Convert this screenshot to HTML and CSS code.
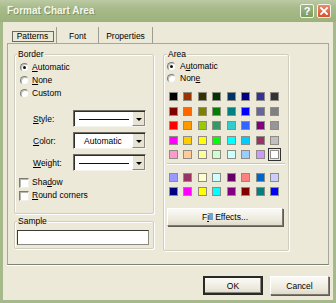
FILE: index.html
```html
<!DOCTYPE html>
<html>
<head>
<meta charset="utf-8">
<title>Format Chart Area</title>
<link rel="stylesheet" href="styles.css">
</head>
<body>
<div class="window">
  <div class="titlebar">
    <span class="title">Format Chart Area</span>
    <div class="tb-btns">
      <span class="tb-btn help">?</span>
      <span class="tb-btn close"><svg width="8" height="8" viewBox="0 0 8 8"><path d="M1 1L7 7M7 1L1 7" stroke="#fff" stroke-width="1.8" stroke-linecap="square"/></svg></span>
    </div>
  </div>
  <div class="frame">
    <div class="client">
      <div class="tabs">
        <div class="tab tab-patterns"><span class="focus">Patterns</span></div>
        <div class="tab tab-font">Font</div>
        <div class="tab tab-props">Properties</div>
      </div>
      <div class="panel">
        <div class="col-left">
          <div class="group group-border">
            <span class="group-title">Border</span>
            <div class="radio-list">
              <div class="row radio-row"><span class="radio checked"></span><span><u>A</u>utomatic</span></div>
              <div class="row radio-row"><span class="radio"></span><span><u>N</u>one</span></div>
              <div class="row radio-row"><span class="radio"></span><span>Custom</span></div>
            </div>
            <div class="combo-list">
              <div class="combo-row"><span class="combo-label"><u>S</u>tyle:</span><div class="combo"><div class="combo-value"><span class="line"></span></div><span class="combo-arrow"><span class="tri"></span></span></div></div>
              <div class="combo-row"><span class="combo-label"><u>C</u>olor:</span><div class="combo"><div class="combo-value combo-text">Automatic</div><span class="combo-arrow"><span class="tri"></span></span></div></div>
              <div class="combo-row"><span class="combo-label"><u>W</u>eight:</span><div class="combo"><div class="combo-value"><span class="line"></span></div><span class="combo-arrow"><span class="tri"></span></span></div></div>
            </div>
            <div class="check-list">
              <div class="row check-row"><span class="check"></span><span>Sha<u>d</u>ow</span></div>
              <div class="row check-row"><span class="check"></span><span><u>R</u>ound corners</span></div>
            </div>
          </div>
          <div class="group group-sample">
            <span class="group-title">Sample</span>
            <div class="sample-box"></div>
          </div>
        </div>
        <div class="col-right">
          <div class="group group-area">
            <span class="group-title">Area</span>
            <div class="area-radios">
              <div class="row area-row"><span class="radio checked"></span><span>A<u>u</u>tomatic</span></div>
              <div class="row area-row"><span class="radio"></span><span>Non<u>e</u></span></div>
            </div>
            <div class="palette">
              <span class="sw" style="background:#000000"></span>
              <span class="sw" style="background:#993300"></span>
              <span class="sw" style="background:#333300"></span>
              <span class="sw" style="background:#003300"></span>
              <span class="sw" style="background:#003366"></span>
              <span class="sw" style="background:#000080"></span>
              <span class="sw" style="background:#333399"></span>
              <span class="sw" style="background:#333333"></span>
              <span class="sw" style="background:#800000"></span>
              <span class="sw" style="background:#ff6600"></span>
              <span class="sw" style="background:#808000"></span>
              <span class="sw" style="background:#008000"></span>
              <span class="sw" style="background:#008080"></span>
              <span class="sw" style="background:#0000ff"></span>
              <span class="sw" style="background:#666699"></span>
              <span class="sw" style="background:#808080"></span>
              <span class="sw" style="background:#ff0000"></span>
              <span class="sw" style="background:#ff9900"></span>
              <span class="sw" style="background:#99cc00"></span>
              <span class="sw" style="background:#339966"></span>
              <span class="sw" style="background:#33cccc"></span>
              <span class="sw" style="background:#3366ff"></span>
              <span class="sw" style="background:#800080"></span>
              <span class="sw" style="background:#969696"></span>
              <span class="sw" style="background:#ff00ff"></span>
              <span class="sw" style="background:#ffcc00"></span>
              <span class="sw" style="background:#ffff00"></span>
              <span class="sw" style="background:#00ff00"></span>
              <span class="sw" style="background:#00ffff"></span>
              <span class="sw" style="background:#00ccff"></span>
              <span class="sw" style="background:#993366"></span>
              <span class="sw" style="background:#c0c0c0"></span>
              <span class="sw" style="background:#ff99cc"></span>
              <span class="sw" style="background:#ffcc99"></span>
              <span class="sw" style="background:#ffff99"></span>
              <span class="sw" style="background:#ccffcc"></span>
              <span class="sw" style="background:#ccffff"></span>
              <span class="sw" style="background:#99ccff"></span>
              <span class="sw" style="background:#cc99ff"></span>
              <span class="sw sw-selected" style="background:#ffffff"></span>
            </div>
            <div class="palette-sep"></div>
            <div class="palette palette-chart">
              <span class="sw" style="background:#9999ff"></span>
              <span class="sw" style="background:#993366"></span>
              <span class="sw" style="background:#ffffcc"></span>
              <span class="sw" style="background:#ccffff"></span>
              <span class="sw" style="background:#660066"></span>
              <span class="sw" style="background:#ff8080"></span>
              <span class="sw" style="background:#0066cc"></span>
              <span class="sw" style="background:#ccccff"></span>
              <span class="sw" style="background:#000080"></span>
              <span class="sw" style="background:#ff00ff"></span>
              <span class="sw" style="background:#ffff00"></span>
              <span class="sw" style="background:#00ffff"></span>
              <span class="sw" style="background:#800080"></span>
              <span class="sw" style="background:#800000"></span>
              <span class="sw" style="background:#008080"></span>
              <span class="sw" style="background:#0000ff"></span>
            </div>
            <div class="btn btn-fill">F<u>i</u>ll Effects...</div>
          </div>
        </div>
      </div>
      <div class="dialog-buttons">
        <div class="btn btn-ok">OK</div>
        <div class="btn btn-cancel">Cancel</div>
      </div>
    </div>
  </div>
</div>
</body>
</html>
```
FILE: styles.css
```css
* { box-sizing: border-box; }
html, body { margin: 0; padding: 0; }
body {
  width: 336px;
  height: 303px;
  overflow: hidden;
  font-family: "Liberation Sans", Arial, sans-serif;
  font-size: 8.5px;
  color: #000;
  background: #a6b98a;
}
u { text-decoration: underline; text-underline-offset: 1px; }

.window {
  width: 336px;
  height: 303px;
  display: flex;
  flex-direction: column;
}

/* title bar */
.titlebar {
  height: 22px;
  flex: none;
  display: flex;
  justify-content: space-between;
  align-items: flex-start;
  padding: 0 5px 0 7px;
  background: linear-gradient(#bccaa4 0%, #a8bb8a 35%, #9cb17c 100%);
}
.title {
  margin-top: 5px;
  font-size: 10px;
  font-weight: bold;
  line-height: 12px;
  color: #f4f6ea;
  text-shadow: 1px 1px 0 #7f9163;
}
.tb-btns {
  display: flex;
  gap: 3px;
  margin-top: 4px;
}
.tb-btn {
  width: 14px;
  height: 14px;
  border: 1px solid #f2f4ea;
  border-radius: 2px;
  display: flex;
  align-items: center;
  justify-content: center;
}
.help {
  background: linear-gradient(#9fb884, #7d9a5e);
  color: #fff;
  font-weight: bold;
  font-size: 11px;
  line-height: 12px;
}
.close {
  background: linear-gradient(#eb8a6c, #d5532f);
}

/* window frame */
.frame {
  flex: 1;
  display: flex;
  padding: 0 3px 3px 3px;
  background: #a6b98a;
}
.client {
  flex: 1;
  background: #ece9d8;
  padding: 5px 4px 0 4px;
  display: flex;
  flex-direction: column;
}

/* tabs */
.tabs {
  height: 16px;
  display: flex;
  margin-left: 2px;
}
.tab {
  height: 16px;
  display: flex;
  align-items: flex-end;
  justify-content: center;
  padding-bottom: 1px;
  border-right: 1px solid #9c9c92;
  line-height: 11px;
}
.tab-patterns { width: 48px; }
.tab-font { width: 42px; }
.tab-props { width: 54px; }
.focus {
  width: 42px;
  height: 11px;
  border: 1px solid #6b6b66;
  text-align: center;
  line-height: 9px;
}

/* panel */
.panel {
  height: 222px;
  border: 1px solid #a5a99b;
  border-bottom-color: #7f8478;
  box-shadow: 0 1px 0 #fff;
  display: flex;
  gap: 9px;
  padding: 10px 0 0 6px;
}

/* group boxes */
.group {
  border: 1px solid #cfcdbf;
  border-radius: 2px;
  box-shadow: inset 1px 1px 0 #fff, 1px 1px 0 #fff;
}
.group-title {
  display: block;
  width: fit-content;
  height: 10px;
  line-height: 10px;
  margin: -6px 0 0 2px;
  padding: 0 1px;
  background: #ece9d8;
}
.col-left {
  width: 140px;
  display: flex;
  flex-direction: column;
}
.group-border {
  height: 160px;
}
.group-sample {
  margin-top: 7px;
  height: 28px;
}
.row {
  display: flex;
  align-items: center;
  height: 13px;
  line-height: 13px;
}

/* radios */
.radio-list {
  padding: 2px 0 0 5px;
}
.radio-row { gap: 3px; }
.radio {
  width: 9px;
  height: 9px;
  flex: none;
  border-radius: 50%;
  background: #fff;
  border: 1px solid;
  border-color: #7d7d76 #e8e8e0 #e8e8e0 #7d7d76;
  box-shadow: inset 1px 1px 0 #c4c2b6;
  display: flex;
  align-items: center;
  justify-content: center;
}
.radio.checked::after {
  content: "";
  width: 3px;
  height: 3px;
  border-radius: 50%;
  background: #111;
}

/* combos */
.combo-list {
  margin-top: 10px;
  padding-left: 18px;
  display: flex;
  flex-direction: column;
  gap: 5px;
}
.combo-row {
  display: flex;
  align-items: center;
  height: 17px;
}
.combo-label { width: 40px; }
.combo {
  width: 73px;
  height: 17px;
  display: flex;
  background: #fff;
  border: 1px solid;
  border-color: #6e6e66 #f4f3ee #f4f3ee #6e6e66;
  box-shadow: inset 1px 1px 0 #2e2e2a;
  padding: 1px 0 0 1px;
}
.combo-value {
  flex: 1;
  display: flex;
  align-items: center;
  padding-left: 4px;
}
.combo-text { padding-left: 9px; }
.line {
  width: 50px;
  height: 1px;
  background: #111;
}
.combo-arrow {
  width: 13px;
  background: #e6e3d3;
  border-left: 1px solid #fff;
  border-right: 1px solid #8c8a80;
  border-bottom: 1px solid #8c8a80;
  display: flex;
  align-items: center;
  justify-content: center;
  padding-top: 2px;
}
.tri {
  width: 0;
  height: 0;
  border-left: 3px solid transparent;
  border-right: 3px solid transparent;
  border-top: 3px solid #000;
}

/* checkboxes */
.check-list {
  margin-top: 5px;
  padding-left: 4px;
}
.check-row { gap: 3px; }
.check {
  width: 10px;
  height: 10px;
  flex: none;
  background: #fff;
  border: 1px solid;
  border-color: #7d7d76 #f0efe8 #f0efe8 #7d7d76;
  box-shadow: inset 1px 1px 0 #b8b6aa;
}

/* sample */
.sample-box {
  margin: 4px 0 0 2px;
  width: 132px;
  height: 15px;
  background: #fff;
  border: 1px solid #3a3a36;
  border-right-color: #8a8880;
  border-bottom-color: #8a8880;
}

/* area */
.col-right {
  width: 126px;
}
.group-area {
  height: 197px;
  padding: 0 0 0 1px;
}
.area-radios {
  padding-left: 2px;
  margin-top: 1px;
}
.area-row { height: 12px; line-height: 12px; gap: 4px; }
.palette {
  margin: 8px 0 0 4px;
  display: grid;
  grid-template-columns: repeat(8, 9px);
  column-gap: 5.43px;
  row-gap: 5.5px;
}
.palette-chart {
  margin-top: 9px;
  row-gap: 5px;
}
.sw {
  width: 9px;
  height: 9px;
  border: 1px solid #8e8c84;
}
.sw-selected {
  outline: 1px solid #333;
  outline-offset: 1px;
}
.palette-sep {
  margin: 4px 3px 0 2px;
  height: 1px;
  background: #c9c7b8;
  box-shadow: 0 1px 0 #fff;
}

/* buttons */
.btn {
  display: flex;
  align-items: center;
  justify-content: center;
  background: linear-gradient(#fbfaf6, #ece9dc 70%, #dedbcb);
  border: 1px solid;
  border-color: #fff #7c7a70 #7c7a70 #fff;
  box-shadow: 1px 1px 0 #5e5c54;
}
.btn-fill {
  margin: 12px 0 0 2px;
  width: 116px;
  height: 18px;
}
.dialog-buttons {
  margin-top: 11px;
  display: flex;
  justify-content: flex-end;
  gap: 7px;
}
.btn-ok {
  width: 60px;
  height: 19px;
  border: 2px solid #2a2a26;
  box-shadow: inset -1px -1px 0 #8a887e;
}
.btn-cancel {
  width: 59px;
  height: 19px;
}
```
